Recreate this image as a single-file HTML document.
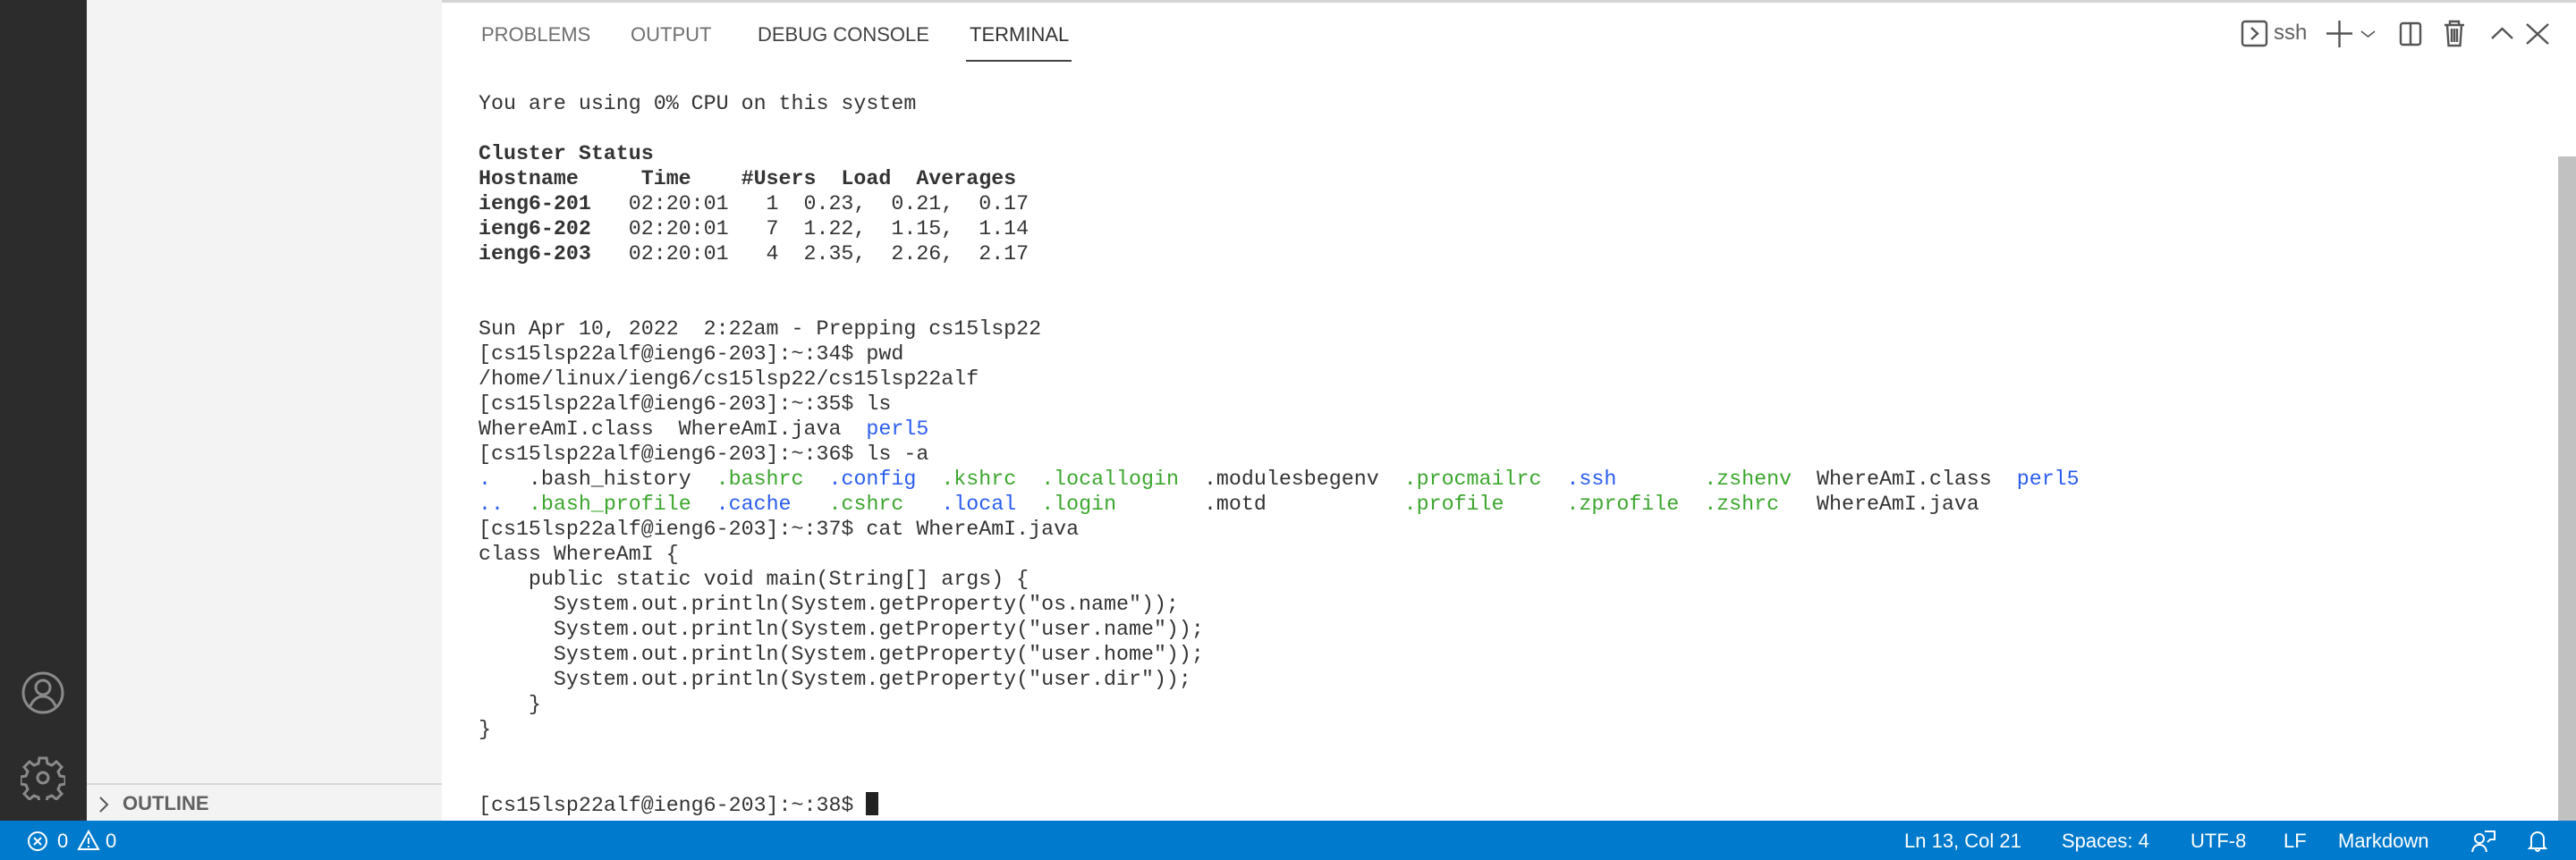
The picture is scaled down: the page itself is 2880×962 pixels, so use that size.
<!DOCTYPE html>
<html><head><meta charset="utf-8"><style>
*{margin:0;padding:0;box-sizing:border-box}
html,body{width:2880px;height:962px;overflow:hidden;background:#fff;font-family:"Liberation Sans",sans-serif}
#act{position:absolute;left:0;top:0;width:97px;height:918px;background:#2c2c2c}
#side{position:absolute;left:97px;top:0;width:397px;height:918px;background:#f3f3f3}
#outl{position:absolute;left:97px;top:876px;width:397px;height:42px;border-top:2px solid #d8d8d8;font-weight:bold;font-size:22px;color:#616161;}
#outl span{position:absolute;left:40px;top:8px}
#topline{position:absolute;left:494px;top:0;width:2386px;height:3px;background:#d4d4d4}
.tab{position:absolute;top:26px;font-size:22px;color:#6f6f6f}
#ul{position:absolute;left:1080px;top:67px;width:118px;height:2px;background:#424242}
pre{position:absolute;left:535px;top:102px;font-family:"Liberation Mono","DejaVu Sans Mono",monospace;font-size:23.3px;line-height:28px;color:#333}
.b{color:#2b5ded}.g{color:#3ca62e}
#scroll{position:absolute;left:2860px;top:175px;width:20px;height:743px;background:#c1c1c1}
#status{position:absolute;left:0;top:918px;width:2880px;height:44px;background:#007acc;color:#fff;font-size:22px}
#status span{position:absolute;top:10px}
#cursor{display:inline-block;width:14px;height:26px;background:#222;vertical-align:-5px}
</style></head><body>
<div id="act">
<svg style="position:absolute;left:23px;top:750px" width="50" height="50" viewBox="0 0 50 50" fill="none" stroke="#8a8a8a" stroke-width="3"><circle cx="25" cy="25" r="22"/><circle cx="25" cy="19" r="8"/><path d="M11 40c3-8 9-11 14-11s11 3 14 11"/></svg>
<svg style="position:absolute;left:23px;top:845px" width="50" height="50" viewBox="0 0 50 50" fill="none" stroke="#8a8a8a" stroke-width="3"><path d="M21 3h8l1 6 5 2 5-4 6 6-4 5 2 5 6 1v8l-6 1-2 5 4 5-6 6-5-4-5 2-1 6h-8l-1-6-5-2-5 4-6-6 4-5-2-5-6-1v-8l6-1 2-5-4-5 6-6 5 4 5-2z"/><circle cx="25" cy="25" r="6"/></svg>
</div>
<div id="side"></div>
<div id="outl"><svg style="position:absolute;left:12px;top:12px" width="14" height="20" viewBox="0 0 14 20" fill="none" stroke="#555" stroke-width="2"><path d="M3 2l8 8-8 8"/></svg><span>OUTLINE</span></div>
<div id="topline"></div>
<div class="tab" style="left:538px">PROBLEMS</div>
<div class="tab" style="left:705px">OUTPUT</div>
<div class="tab" style="left:847px;color:#424242">DEBUG CONSOLE</div>
<div class="tab" style="left:1084px;color:#333">TERMINAL</div>
<div id="ul"></div>
<svg style="position:absolute;left:2494px;top:21px" width="370" height="34" viewBox="0 0 370 34" fill="none" stroke="#555" stroke-width="2.4">
<rect x="13" y="3" width="27" height="27" rx="3"/><path d="M23 10l7 6.5-7 6.5"/>
<path d="M121.5 2v30M107 16.5h29"/><path d="M146 14l7.5 6 7.5-6" stroke-width="1.6"/>
<rect x="190" y="5" width="22" height="24" rx="2.5"/><path d="M201 5v24"/>
<path d="M239 7h22M245 7V3h10v4M242 7l1.5 23h13L258 7M247 11v15M250 11v15M253 11v15"/>
<path d="M292 22l11.5-11 11.5 11"/><path d="M331 6l24 22M355 6l-24 22"/>
</svg>
<div style="position:absolute;left:2542px;top:23px;font-size:24px;color:#616161">ssh</div>
<pre>You are using 0% CPU on this system

<b>Cluster Status
Hostname     Time    #Users  Load  Averages
ieng6-201</b>   02:20:01   1  0.23,  0.21,  0.17
<b>ieng6-202</b>   02:20:01   7  1.22,  1.15,  1.14
<b>ieng6-203</b>   02:20:01   4  2.35,  2.26,  2.17


Sun Apr 10, 2022  2:22am - Prepping cs15lsp22
[cs15lsp22alf@ieng6-203]:~:34$ pwd
/home/linux/ieng6/cs15lsp22/cs15lsp22alf
[cs15lsp22alf@ieng6-203]:~:35$ ls
WhereAmI.class  WhereAmI.java  <span class="b">perl5</span>
[cs15lsp22alf@ieng6-203]:~:36$ ls -a
<span class="b">.</span>   .bash_history  <span class="g">.bashrc</span>  <span class="b">.config</span>  <span class="g">.kshrc</span>  <span class="g">.locallogin</span>  .modulesbegenv  <span class="g">.procmailrc</span>  <span class="b">.ssh</span>       <span class="g">.zshenv</span>  WhereAmI.class  <span class="b">perl5</span>
<span class="b">..</span>  <span class="g">.bash_profile</span>  <span class="b">.cache</span>   <span class="g">.cshrc</span>   <span class="b">.local</span>  <span class="g">.login</span>       .motd           <span class="g">.profile</span>     <span class="g">.zprofile</span>  <span class="g">.zshrc</span>   WhereAmI.java
[cs15lsp22alf@ieng6-203]:~:37$ cat WhereAmI.java
class WhereAmI {
    public static void main(String[] args) {
      System.out.println(System.getProperty("os.name"));
      System.out.println(System.getProperty("user.name"));
      System.out.println(System.getProperty("user.home"));
      System.out.println(System.getProperty("user.dir"));
    }
}


[cs15lsp22alf@ieng6-203]:~:38$ <span id="cursor"></span></pre>
<div id="scroll"></div>
<div id="status">
<svg style="position:absolute;left:30px;top:11px" width="24" height="24" viewBox="0 0 24 24" fill="none" stroke="#fff" stroke-width="2"><circle cx="12" cy="12" r="10"/><path d="M8 8l8 8M16 8l-8 8"/></svg>
<span style="left:64px">0</span>
<svg style="position:absolute;left:86px;top:10px" width="26" height="24" viewBox="0 0 26 24" fill="none" stroke="#fff" stroke-width="2"><path d="M13 2L2 22h22z"/><path d="M13 9v7M13 18v2"/></svg>
<span style="left:118px">0</span>
<span style="left:2129px">Ln 13, Col 21</span>
<span style="left:2305px">Spaces: 4</span>
<span style="left:2449px">UTF-8</span>
<span style="left:2553px">LF</span>
<span style="left:2614px">Markdown</span>
<svg style="position:absolute;left:2763px;top:10px" width="28" height="26" viewBox="0 0 28 26" fill="none" stroke="#fff" stroke-width="2"><circle cx="9" cy="10" r="5"/><path d="M1 25c1-6 4-8 8-8s7 2 8 8M15 2h11v9h-5l-3 3"/></svg>
<svg style="position:absolute;left:2826px;top:9px" width="22" height="28" viewBox="0 0 22 28" fill="none" stroke="#fff" stroke-width="2"><path d="M4 20V11a7 7 0 0114 0v9l2 2H2zM9 23a2 2 0 004 0"/></svg>
</div>
</body></html>
